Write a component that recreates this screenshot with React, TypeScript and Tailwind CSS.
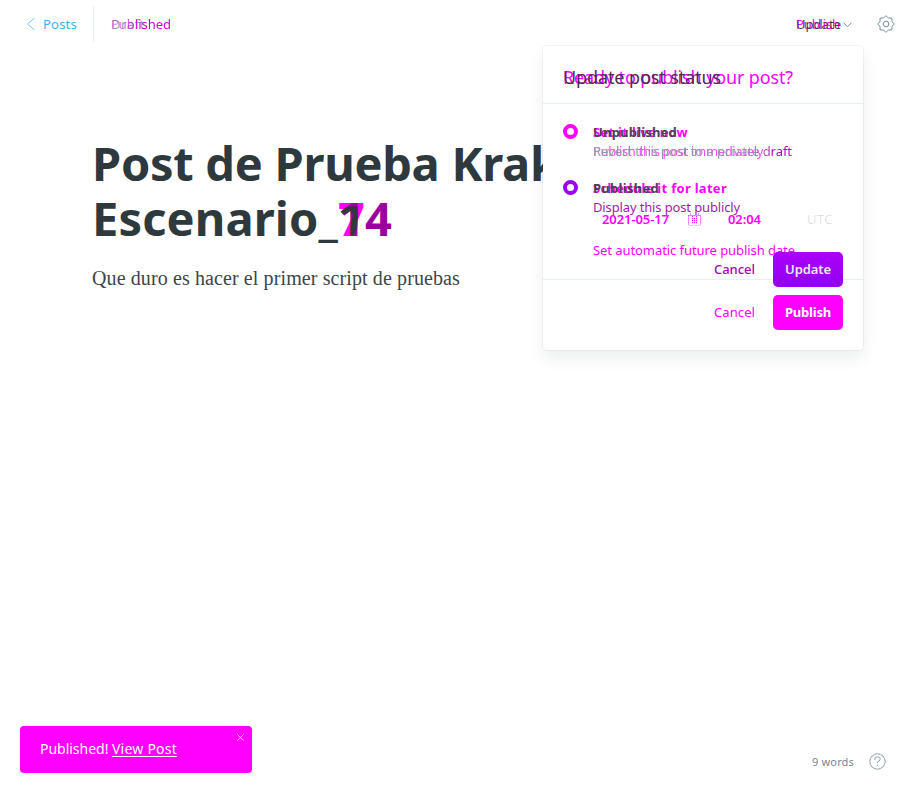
import React, { useLayoutEffect, useRef, useState } from "react";

type FitProps = { w: number; className?: string; children: string };

/* One line of text whose letter spacing is adjusted to fill a given width. */
function Fit({ w, className = "", children }: FitProps) {
  const ref = useRef<HTMLSpanElement>(null);
  const [spacing, setSpacing] = useState(0);
  useLayoutEffect(() => {
    if (ref.current) {
      const natural = ref.current.getBoundingClientRect().width;
      setSpacing((w - natural) / children.length);
    }
  }, [w, children]);
  return (
    <span
      ref={ref}
      className={`inline-block w-max justify-self-start whitespace-pre ${className}`}
      style={{ letterSpacing: spacing }}
    >
      {children}
    </span>
  );
}

const layer = "col-start-1 row-start-1";

function Radio({ className }: { className: string }) {
  return <span className={`size-[15px] shrink-0 rounded-full border-4 bg-white ${className}`} />;
}

function PublishLayer() {
  return (
    <div className={`${layer} flex flex-col px-5 pt-[18px] text-[#ff00ff]`}>
      <div className="flex h-14 gap-[15px]">
        <Radio className="mt-[2px] border-[#ff00ff]" />
        <div className="flex flex-col items-start text-[13px] leading-5">
          <Fit w={95} className="font-bold">Set it live now</Fit>
          <Fit w={170} className="relative top-[-1px] opacity-70">Publish this post immediately</Fit>
        </div>
      </div>
      <div className="flex h-[101px] gap-[15px]">
        <Radio className="mt-[2px] border-[#9b00f5]" />
        <div className="flex flex-1 flex-col items-start text-[13px] leading-5">
          <Fit w={134} className="font-bold">Schedule it for later</Fit>
          <div className="mt-[6px] flex h-[30px] items-center pl-[9px] font-semibold">
            <Fit w={67}>2021-05-17</Fit>
            <svg className="ml-[19px] mr-[27px]" width="13" height="13" viewBox="0 0 13 13" fill="none" stroke="#ff00ff" strokeDasharray="1 1">
              <path d="M.5 2.5h12M.5 2.5v10M12.5 2.5v10M2.5 .5v2M10.5.5v2M4.5 3v7M6.5 5v5M8.5 3v7" />
              <path d="M1 12.5h11" stroke="#d9dadb" strokeDasharray="none" />
            </svg>
            <Fit w={33}>02:04</Fit>
            <Fit w={26} className="ml-[46px] font-light text-[#d9dadb]">UTC</Fit>
          </div>
          <Fit w={202} className="mt-[6px]">Set automatic future publish date</Fit>
        </div>
      </div>
      <div className="-mx-5 flex h-[71px] items-start justify-end border-t border-[#e5eff5] px-5 pt-[15px]">
        <Fit w={41} className="mr-[18px] text-[13px] leading-[35px]">Cancel</Fit>
        <button className="flex h-[35px] w-[70px] items-center justify-center rounded-[5px] bg-[#ff00ff] text-[13px] font-bold text-white">
          <Fit w={46}>Publish</Fit>
        </button>
      </div>
    </div>
  );
}

function UpdateLayer() {
  return (
    <div className={`${layer} flex flex-col px-5 pt-[18px] text-[13px] leading-5 text-[#343f44]`}>
      <div className="flex h-14 flex-col items-start pl-[30px]">
        <Fit w={84} className="font-bold text-[#494450]">Unpublished</Fit>
        <Fit w={199} className="relative top-[-1px] bg-gradient-to-r from-[#8c9ca3] from-[80%] to-[#b500bd] to-[90%] bg-clip-text text-transparent">
          Revert this post to a private draft
        </Fit>
      </div>
      <div className="flex h-[74px] flex-col items-start pl-[30px]">
        <Fit w={66} className="font-bold text-[#4b3e50]">Published</Fit>
        <Fit w={147} className="relative top-[-1px] text-[#a31aa9]">Display this post publicly</Fit>
      </div>
      <div className="flex justify-end">
        <Fit w={41} className="mr-[18px] font-medium leading-[35px] text-[#a600b0]">Cancel</Fit>
        <button className="flex h-[35px] w-[70px] items-center justify-center rounded-[5px] bg-gradient-to-b from-[#aa00fa] to-[#9300ef] font-semibold text-[#ebe9ed]">
          <Fit w={46} className="relative top-[-1px]">Update</Fit>
        </button>
      </div>
    </div>
  );
}

function StatusMenu() {
  return (
    <section className="absolute left-[543px] top-[46px] h-[304px] w-80 rounded-[4px] bg-white shadow-[0_0_0_1px_rgba(99,114,130,0.08),0_8px_16px_rgba(27,39,51,0.08)]">
      <div className="grid h-[58px] border-b border-[#e5eff5] px-5 pt-[17px] text-[18px] leading-7">
        <Fit w={230} className={`${layer} text-[#ff00ff]`}>Ready to publish your post?</Fit>
        <Fit w={158} className={`${layer} text-[#4c2c54]`}>Update post status</Fit>
      </div>
      <div className="grid">
        <PublishLayer />
        <UpdateLayer />
      </div>
    </section>
  );
}

function Header() {
  return (
    <header className="flex h-12 items-center text-[13px] leading-5">
      <svg className="ml-[26px] mr-[7px]" width="10" height="14" viewBox="0 0 10 14" fill="none" stroke="#7fcaf0">
        <path d="M8.5 1 1.5 7l7 6" />
      </svg>
      <Fit w={34} className="text-[#3eb0ef]">Posts</Fit>
      <span className="ml-4 h-9 w-px bg-[#e5eff5]" />
      <div className="ml-[17px] grid">
        <Fit w={34} className={`${layer} text-[#8ea4ad]`}>Draft</Fit>
        <Fit w={60} className={`${layer} bg-gradient-to-r from-[#ee20ee80] from-[10%] to-[#be00cc] to-[55%] bg-clip-text text-transparent`}>Published</Fit>
      </div>
      <div className="ml-auto mr-[2px] grid">
        <Fit w={44} className={`${layer} text-[#ff00ff]`}>Publish</Fit>
        <Fit w={45} className={`${layer} text-[#4b384f]`}>Update</Fit>
      </div>
      <svg className="mr-[25px] mt-0.5" width="9" height="6" viewBox="0 0 9 6" fill="none" stroke="#708a96">
        <path d="m.5.7 4 4 4-4" />
      </svg>
      <svg className="mr-[14px]" width="18" height="18" viewBox="0 0 18 18" fill="none" stroke="#718d99" strokeLinejoin="round">
        <circle cx="9" cy="9" r="2.8" />
        <path d="M7.4 2.1Q9-.6 10.6 2.1Q11.2 3.6 12.8 3Q15.9 2.1 15 5.2Q14.4 6.8 15.9 7.4Q18.6 9 15.9 10.6Q14.4 11.2 15 12.8Q15.9 15.9 12.8 15Q11.2 14.4 10.6 15.9Q9 18.6 7.4 15.9Q6.8 14.4 5.2 15Q2.1 15.9 3 12.8Q3.6 11.2 2.1 10.6Q-.6 9 2.1 7.4Q3.6 6.8 3 5.2Q2.1 2.1 5.2 3Q6.8 3.6 7.4 2.1Z" />
      </svg>
    </header>
  );
}

export default function App() {
  return (
    <div className="relative flex h-[793px] w-[909px] flex-col overflow-hidden bg-white font-['Noto_Sans','Open_Sans',sans-serif]">
      <Header />
      <main className="flex flex-1 flex-col pl-[92px] pt-[88px]">
        <h1 className="flex flex-col text-[47px] font-bold leading-[55px] text-[#2e393e]">
          <span className="whitespace-nowrap">
            <Fit w={438}>Post de Prueba Kra</Fit>ken
          </span>
          <span className="flex">
            <Fit w={246}>Escenario_</Fit>
            <span className="grid w-[27px]">
              <span className={`${layer} text-[#ff00ff]`}>7</span>
              <span className={`${layer} text-[#99009f]`}>1</span>
              <span className={`${layer} [clip-path:polygon(0_28%,100%_28%,58%_81%,35%_81%,58%_41%,0_41%)]`}>1</span>
            </span>
            <span className="text-[#99009f]">4</span>
          </span>
        </h1>
        <p className="mt-4 font-['Liberation_Serif',serif] text-[20px] leading-8 text-[#3b454a]">
          <Fit w={368}>Que duro es hacer el primer script de pruebas</Fit>
        </p>
      </main>
      <footer className="flex items-end justify-between pb-5 pl-5 pr-[23px]">
        <div className="flex h-[47px] w-[232px] justify-between rounded-[4px] bg-[#ff00ff] text-[14px] leading-[46px] text-white shadow-[0_1px_5px_rgba(0,0,0,0.08)]">
          <span className="pl-5">
            <Fit w={72}>Published! </Fit>
            <Fit w={65} className="underline underline-offset-2">View Post</Fit>
          </span>
          <svg className="mr-2 mt-2" width="7" height="7" viewBox="0 0 7 7" stroke="#fff" strokeWidth=".8">
            <path d="m.3.3 6.4 6.4m0-6.4L.3 6.7" />
          </svg>
        </div>
        <div className="flex items-center pb-[3px] text-[11px] leading-4 text-[#738a94]">
          <Fit w={42}>9 words</Fit>
          <svg className="ml-[15px]" width="17" height="17" viewBox="0 0 17 17" fill="none" stroke="#8ba0aa">
            <circle cx="8.5" cy="8.5" r="7.7" />
            <path d="M5.9 7V6.2a2.6 2.3 0 1 1 4 1.8Q8.5 8.6 8.5 10M8.5 11.8v1" />
          </svg>
        </div>
      </footer>
      <StatusMenu />
    </div>
  );
}
